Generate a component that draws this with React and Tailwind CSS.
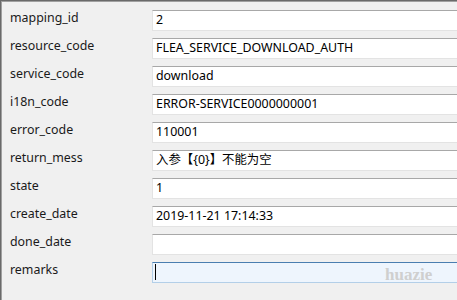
import React from 'react';

const rows = [
  { label: 'mapping_id', value: '2' },
  { label: 'resource_code', value: 'FLEA_SERVICE_DOWNLOAD_AUTH' },
  { label: 'service_code', value: 'download' },
  { label: 'i18n_code', value: 'ERROR-SERVICE0000000001' },
  { label: 'error_code', value: '110001' },
  { label: 'return_mess', value: '入参【{0}】不能为空' },
  { label: 'state', value: '1' },
  { label: 'create_date', value: '2019-11-21 17:14:33' },
  { label: 'done_date', value: '' },
];

function Field({ label, value }) {
  return (
    <div className="flex items-center h-[28px]">
      <div className="w-[151px] pl-[9px] pb-[3px] text-[12.4px] text-[#1a1a1a]">{label}</div>
      <div className="flex-1 h-[21px] bg-white border border-[#e3e3e3] border-t-[#a8a8a8] pl-[3px] flex items-center text-[12.4px] text-black whitespace-nowrap">
        {value}
      </div>
    </div>
  );
}

export default function App() {
  return (
    <div
      className="w-[457px] h-[300px] overflow-hidden bg-[#f0f0f0] border-t border-l border-[#6a6a6a] shadow-[inset_1px_1px_0_#a0a0a0] pt-[5px]"
      style={{ fontFamily: '"Noto Sans", "Noto Sans CJK SC", sans-serif' }}
    >
      <div className="w-[480px]">
        {rows.map((r) => (
          <Field key={r.label} label={r.label} value={r.value} />
        ))}
        {/* remarks - focused */}
        <div className="flex items-center h-[28px]">
          <div className="w-[151px] pl-[9px] pb-[3px] text-[12.4px] text-[#1a1a1a]">remarks</div>
          <div className="relative flex-1 h-[21px] bg-[#eef5fd] border border-[#b3cfe8] border-t-[#4a7eb0] pl-[2px] flex items-center">
            <span className="block w-[1px] h-[16px] bg-black" />
            <span
              className="absolute left-[232px] top-[-1px] text-[17px] font-bold text-[#cfcfcf]"
              style={{ fontFamily: '"Liberation Serif", serif' }}
            >
              huazie
            </span>
          </div>
        </div>
      </div>
    </div>
  );
}
